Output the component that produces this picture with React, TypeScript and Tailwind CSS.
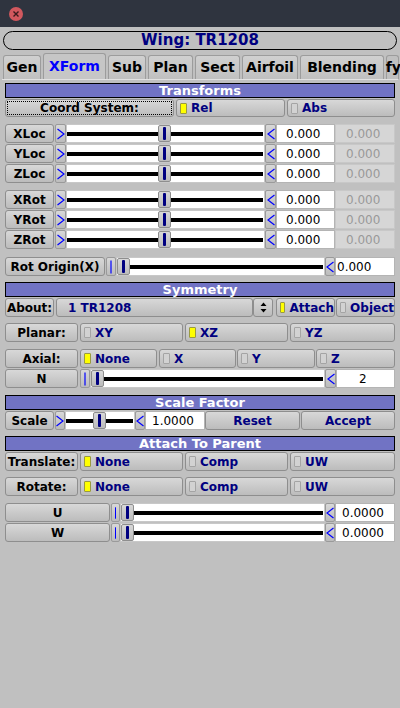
import React from 'react';

const font = "font-['DejaVu_Sans','Liberation_Sans',sans-serif]";

function Btn({ w, children, focus = false }: { w: string; children?: React.ReactNode; focus?: boolean }) {
  return (
    <div className={`${w} h-full shrink-0 rounded-[3px] border border-[#8e8e8e] bg-gradient-to-b from-[#d8d8d8] to-[#bcbcbc] p-[1px]`}>
      <div
        className={`flex h-full w-full items-center justify-center text-[12px] font-bold text-black ${
          focus ? 'border border-dotted border-black' : ''
        }`}
      >
        {children}
      </div>
    </div>
  );
}

function Toggle({ w, label, on = false }: { w: string; label: string; on?: boolean }) {
  return (
    <div className={`${w} flex h-full shrink-0 items-center gap-[4px] rounded-[3px] border border-[#8e8e8e] bg-gradient-to-b from-[#d8d8d8] to-[#bcbcbc] pl-[3px]`}>
      <span
        className={`h-[11px] w-[7px] rounded-[1px] border ${
          on ? 'border-[#9a9a40] bg-[#ffff00]' : 'border-[#a4a4a4] bg-[#d2d2d2]'
        }`}
      />
      <span className="text-[12px] font-bold text-[#000080]">{label}</span>
    </div>
  );
}

function Arrow({ w, dir }: { w: string; dir: 'l' | 'r' | 'bar' }) {
  return (
    <div className={`${w} flex h-full shrink-0 items-center justify-center rounded-[2px] border border-[#9a9a9a] bg-gradient-to-b from-[#d8d8d8] to-[#bcbcbc]`}>
      <svg width="8" height="14" viewBox="0 0 8 14">
        {dir === 'r' && <polyline points="0.5,2 7,7 0.5,12" fill="none" stroke="#0000ff" strokeWidth="1.2" />}
        {dir === 'l' && <polyline points="7.5,2 1,7 7.5,12" fill="none" stroke="#0000ff" strokeWidth="1.2" />}
        {dir === 'bar' && <line x1="4" y1="0.5" x2="4" y2="13.5" stroke="#0000ff" strokeWidth="1.2" />}
      </svg>
    </div>
  );
}

function Slider({ w, left }: { w: string; left: string }) {
  return (
    <div className={`${w} flex h-full shrink-0 items-center border border-[#c8c8c8] bg-white`}>
      <div className={`${left} h-[4px] shrink-0 bg-black`} />
      <div className="flex h-full w-[13px] shrink-0 items-center justify-center rounded-[2px] border border-[#8e8e8e] bg-gradient-to-b from-[#d8d8d8] to-[#bcbcbc]">
        <div className="h-[13px] w-[3px] rounded-[1px] bg-[#000080]" />
      </div>
      <div className="mr-[1px] h-[4px] flex-1 bg-black" />
    </div>
  );
}

function Input({ w, value, pad, dim = false }: { w: string; value: string; pad: string; dim?: boolean }) {
  return (
    <div
      className={`${w} ${pad} flex h-full shrink-0 items-center border text-[12px] ${
        dim ? 'border-[#c8c8c8] bg-[#d6d6d6] text-[#999999]' : 'border-[#b4b4b4] bg-white text-black'
      }`}
    >
      {value}
    </div>
  );
}

function Header({ title, mt }: { title: string; mt: string }) {
  return (
    <div className={`${mt} flex h-[15px] items-center justify-center border border-black bg-[#7173c4] text-[13px] font-bold leading-none text-white`}>
      {title}
    </div>
  );
}

function XformRow({ label, mt }: { label: string; mt: string }) {
  return (
    <div className={`${mt} flex h-[19px]`}>
      <Btn w="w-[49px]">{label}</Btn>
      <div className="w-[1px]" />
      <Arrow w="w-[11px]" dir="r" />
      <Slider w="w-[199px]" left="w-[91px]" />
      <Arrow w="w-[11px]" dir="l" />
      <Input w="w-[59px]" value="0.000" pad="pl-[9px]" />
      <Input w="w-[60px]" value="0.000" pad="pl-[10px]" dim />
    </div>
  );
}

const tabs = [
  { name: 'Gen', w: 'w-[38px]' },
  { name: 'XForm', w: 'w-[63px]', active: true },
  { name: 'Sub', w: 'w-[38px]' },
  { name: 'Plan', w: 'w-[45px]' },
  { name: 'Sect', w: 'w-[45px]' },
  { name: 'Airfoil', w: 'w-[56px]' },
  { name: 'Blending', w: 'w-[84px]' },
];

export default function App() {
  return (
    <div className={`${font} h-[708px] w-[400px] overflow-hidden bg-[#c0c0c0]`}>
      {/* window title bar */}
      <div className="flex h-[27px] items-center bg-[#2f343f] pl-[9px]">
        <div className="flex h-[14px] w-[14px] items-center justify-center rounded-full bg-[#d1585e]">
          <svg width="8" height="8" viewBox="0 0 8 8">
            <path d="M1.5 1.5 L6.5 6.5 M6.5 1.5 L1.5 6.5" stroke="#3a1a1c" strokeWidth="1.4" />
          </svg>
        </div>
      </div>

      {/* title */}
      <div className="mx-[3px] mt-[4px] flex h-[19px] items-center justify-center rounded-[10px] border border-black text-[15px] font-bold text-[#000080]">
        Wing: TR1208
      </div>

      {/* tabs */}
      <div className="mt-[3px] flex h-[26px] items-end gap-[2px] pl-[3px]">
        {tabs.map((t) => (
          <div
            key={t.name}
            className={`${t.w} flex shrink-0 items-center justify-center rounded-t-[3px] border border-b-0 border-[#9c9c9c] text-[14px] font-bold ${
              t.active ? 'h-[26px] bg-[#c6c6c6] text-[#0000ff]' : 'h-[24px] bg-gradient-to-b from-[#d0d0d0] to-[#c0c0c0] text-black'
            }`}
          >
            {t.name}
          </div>
        ))}
        <div className="flex h-[24px] w-[13px] shrink-0 items-center justify-end rounded-t-[3px] border border-b-0 border-[#9c9c9c] text-[14px] font-bold text-black">
          <span className="-mr-[3px]">fy</span>
        </div>
      </div>

      {/* panel */}
      <div className="mx-[2px] border-t border-t-[#e2e2e2] px-[3px]">
        <Header title="Transforms" mt="mt-[3px]" />

        <div className="mt-[1px] flex h-[18px] gap-[2px]">
          <Btn w="w-[169px]" focus>
            Coord System:
          </Btn>
          <Toggle w="w-[109px]" label="Rel" on />
          <Toggle w="w-[108px]" label="Abs" />
        </div>

        <XformRow label="XLoc" mt="mt-[7px]" />
        <XformRow label="YLoc" mt="mt-[1px]" />
        <XformRow label="ZLoc" mt="mt-[1px]" />
        <XformRow label="XRot" mt="mt-[7px]" />
        <XformRow label="YRot" mt="mt-[1px]" />
        <XformRow label="ZRot" mt="mt-[1px]" />

        <div className="mt-[8px] flex h-[19px]">
          <Btn w="w-[100px]">Rot Origin(X)</Btn>
          <div className="w-[2px]" />
          <Arrow w="w-[10px]" dir="bar" />
          <Slider w="w-[209px]" left="w-[0px]" />
          <Arrow w="w-[10px]" dir="l" />
          <Input w="w-[60px]" value="0.000" pad="pl-[1px]" />
        </div>

        <Header title="Symmetry" mt="mt-[6px]" />

        <div className="mt-[1px] flex h-[19px]">
          <Btn w="w-[49px]">About:</Btn>
          <div className="w-[2px]" />
          <div className="flex h-full w-[197px] shrink-0 items-center rounded-[3px] border border-[#8e8e8e] bg-gradient-to-b from-[#d8d8d8] to-[#bcbcbc] pl-[11px] text-[12px] font-bold text-[#000080]">
            1 TR1208
          </div>
          <div className="flex h-full w-[20px] shrink-0 items-center justify-center rounded-[3px] border border-[#8e8e8e] bg-gradient-to-b from-[#d8d8d8] to-[#bcbcbc]">
            <svg width="7" height="11" viewBox="0 0 7 11">
              <path d="M3.5 0.5 L6.5 4 L0.5 4 Z M3.5 10.5 L6.5 7 L0.5 7 Z" fill="#000" />
            </svg>
          </div>
          <div className="w-[3px]" />
          <Toggle w="w-[59px]" label="Attach" on />
          <div className="w-[1px]" />
          <Toggle w="w-[59px]" label="Object" />
        </div>

        <div className="mt-[6px] flex h-[19px] gap-[2px]">
          <Btn w="w-[73px]">Planar:</Btn>
          <Toggle w="w-[103px]" label="XY" />
          <Toggle w="w-[103px]" label="XZ" on />
          <Toggle w="w-[105px]" label="YZ" />
        </div>

        <div className="mt-[7px] flex h-[19px]">
          <Btn w="w-[73px]">Axial:</Btn>
          <div className="w-[2px]" />
          <Toggle w="w-[77px]" label="None" on />
          <div className="w-[2px]" />
          <Toggle w="w-[77px]" label="X" />
          <div className="w-[1px]" />
          <Toggle w="w-[78px]" label="Y" />
          <div className="w-[1px]" />
          <Toggle w="w-[79px]" label="Z" />
        </div>

        <div className="mt-[1px] flex h-[19px]">
          <Btn w="w-[73px]">N</Btn>
          <div className="w-[2px]" />
          <Arrow w="w-[10px]" dir="bar" />
          <Slider w="w-[235px]" left="w-[0px]" />
          <Arrow w="w-[11px]" dir="l" />
          <Input w="w-[59px]" value="2" pad="pl-[22px]" />
        </div>

        <Header title="Scale Factor" mt="mt-[7px]" />

        <div className="mt-[1px] flex h-[19px]">
          <Btn w="w-[49px]">Scale</Btn>
          <div className="w-[1px]" />
          <Arrow w="w-[10px]" dir="r" />
          <Slider w="w-[70px]" left="w-[27px]" />
          <Arrow w="w-[10px]" dir="l" />
          <Input w="w-[60px]" value="1.0000" pad="pl-[6px]" />
          <Btn w="w-[95px]">
            <span className="text-[#000080]">Reset</span>
          </Btn>
          <div className="w-[1px]" />
          <Btn w="w-[94px]">
            <span className="text-[#000080]">Accept</span>
          </Btn>
        </div>

        <Header title="Attach To Parent" mt="mt-[6px]" />

        <div className="mt-[1px] flex h-[19px] gap-[2px]">
          <Btn w="w-[73px]">Translate:</Btn>
          <Toggle w="w-[103px]" label="None" on />
          <Toggle w="w-[103px]" label="Comp" />
          <Toggle w="w-[105px]" label="UW" />
        </div>

        <div className="mt-[6px] flex h-[19px] gap-[2px]">
          <Btn w="w-[73px]">Rotate:</Btn>
          <Toggle w="w-[103px]" label="None" on />
          <Toggle w="w-[103px]" label="Comp" />
          <Toggle w="w-[105px]" label="UW" />
        </div>

        {['U', 'W'].map((l, i) => (
          <div key={l} className={`${i === 0 ? 'mt-[7px]' : 'mt-[1px]'} flex h-[19px]`}>
            <Btn w="w-[105px]">{l}</Btn>
            <div className="w-[1px]" />
            <Arrow w="w-[9px]" dir="bar" />
            <Slider w="w-[205px]" left="w-[0px]" />
            <Arrow w="w-[10px]" dir="l" />
            <Input w="w-[60px]" value="0.0000" pad="pl-[6px]" />
          </div>
        ))}
      </div>
    </div>
  );
}
